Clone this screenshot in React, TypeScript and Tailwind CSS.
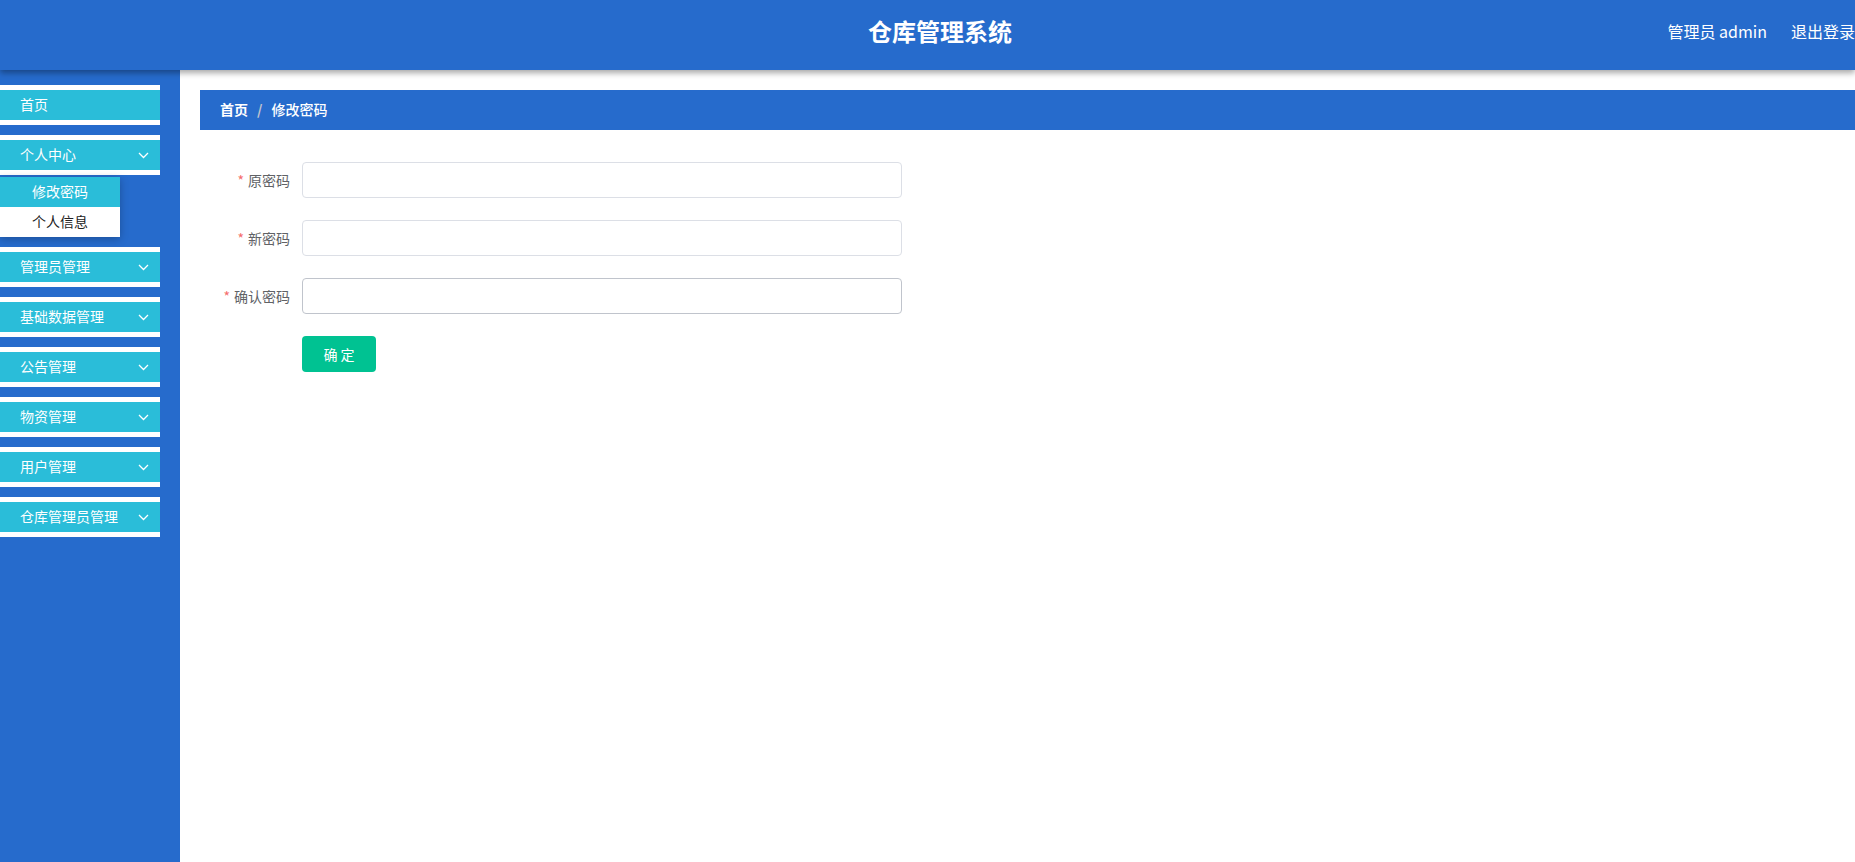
import React from "react";

const font = { fontFamily: '"Noto Sans CJK SC", "Microsoft YaHei", sans-serif' };

function Chevron() {
  return (
    <svg width="11" height="7" viewBox="0 0 11 7" fill="none" className="shrink-0 mt-[2px]">
      <path d="M1 1L5.5 5.5L10 1" stroke="white" strokeWidth="1.3" />
    </svg>
  );
}

function MenuItem({ label, chevron = true }: { label: string; chevron?: boolean }) {
  return (
    <div className="w-[160px] h-[40px] border-y-[5px] border-white bg-[#2abdd9] flex items-center pl-[20px] pr-[11px] pb-[2px] text-[14px] text-white">
      <span className="flex-1">{label}</span>
      {chevron && <Chevron />}
    </div>
  );
}

function Field({ label, border = "border-[#dcdfe6]" }: { label: string; border?: string }) {
  return (
    <div className="flex items-center h-[36px]">
      <label className="w-[102px] pr-[12px] text-right text-[14px] text-[#606266]">
        <span className="text-[#f56c6c] mr-[4px]">*</span>
        {label}
      </label>
      <input type="password" className={`w-[600px] h-[36px] border ${border} rounded-[4px] outline-none px-[15px]`} />
    </div>
  );
}

export default function App() {
  const menus = ["管理员管理", "基础数据管理", "公告管理", "物资管理", "用户管理", "仓库管理员管理"];
  return (
    <div className="w-[1855px] h-[862px] flex flex-col bg-white overflow-hidden" style={font}>
      <header className="relative z-20 h-[70px] shrink-0 bg-[#266bcc] flex items-center pb-[8px] shadow-[0_3px_6px_rgba(0,0,0,0.35)]">
        <div className="ml-[868px] text-[24px] font-bold text-white leading-none">仓库管理系统</div>
        <div className="ml-auto flex items-center gap-[24px] text-[16px] text-white">
          <span>管理员 admin</span>
          <span>退出登录</span>
        </div>
      </header>
      <div className="flex flex-1 min-h-0">
        <aside className="w-[180px] shrink-0 bg-[#266bcc] pt-[15px] flex flex-col">
          <MenuItem label="首页" chevron={false} />
          <div className="mt-[10px]">
            <MenuItem label="个人中心" />
          </div>
          <div className="mt-[2px] w-[120px] shadow-[0_2px_8px_rgba(0,0,0,0.25)] text-[14px]">
            <div className="h-[30px] bg-[#2abdd9] text-white flex items-center justify-center pb-[2px]">修改密码</div>
            <div className="h-[30px] bg-white text-[#222] flex items-center justify-center pb-[2px]">个人信息</div>
          </div>
          <div className="flex flex-col gap-[10px] mt-[10px]">
            {menus.map((m) => (
              <MenuItem key={m} label={m} />
            ))}
          </div>
        </aside>
        <main className="flex-1 pl-[20px] pt-[20px]">
          <div className="h-[40px] bg-[#266bcc] flex items-center pl-[20px] pb-[1px] text-[14px] text-white">
            <span className="font-bold">首页</span>
            <span className="mx-[9px] text-[#c0c4cc] font-bold">/</span>
            <span className="font-medium">修改密码</span>
          </div>
          <div className="mt-[32px] flex flex-col gap-[22px]">
            <Field label="原密码" />
            <Field label="新密码" />
            <Field label="确认密码" border="border-[#c0c4cc]" />
            <div className="pl-[102px]">
              <button className="w-[74px] h-[36px] bg-[#00c292] rounded-[4px] text-white text-[14px]">确 定</button>
            </div>
          </div>
        </main>
      </div>
    </div>
  );
}
